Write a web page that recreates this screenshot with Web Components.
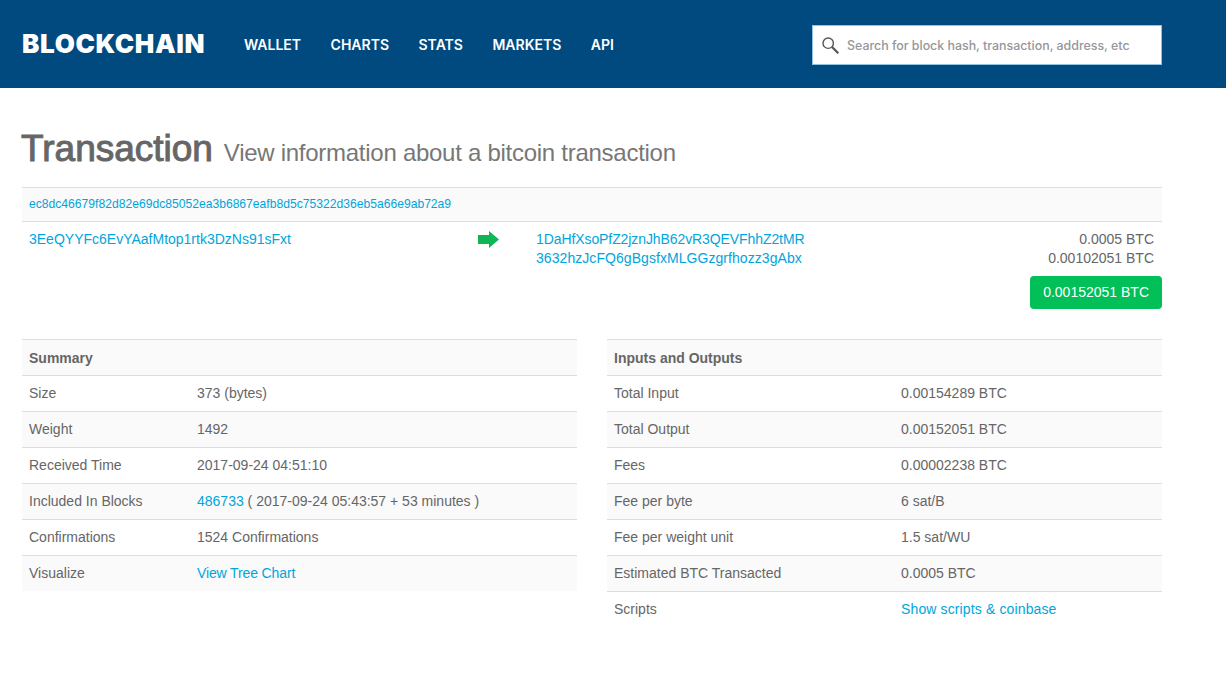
<!DOCTYPE html>
<html>
<head>
<meta charset="utf-8">
<title>Transaction</title>
<style>
  html, body { margin: 0; background: #fff; }
  body { font-family: "Liberation Sans", Arial, sans-serif; font-size: 14px; color: #555; }
  a { color: #00a5dc; text-decoration: none; }
</style>
</head>
<body>
<bc-header></bc-header>
<bc-page>
  <bc-heading title="Transaction" sub="View information about a bitcoin transaction"></bc-heading>
  <bc-tx></bc-tx>
  <bc-columns>
    <bc-table heading="Summary" col="168" id="summary"></bc-table>
    <bc-table heading="Inputs and Outputs" col="287" id="io"></bc-table>
  </bc-columns>
</bc-page>

<script>
const LINK = "#00a5dc";

class BcHeader extends HTMLElement {
  constructor() {
    super();
    this.attachShadow({ mode: "open" });
    this.shadowRoot.innerHTML = `
      <style>
      :host { display: flex; align-items: center; box-sizing: border-box; height: 88px; background: #004a7f; padding: 2px 64px 0 22px; font-family: Inter, "Liberation Sans", sans-serif; }
      .logo { font-size: 26px; font-weight: 900; color: #fff; letter-spacing: 0.65px; width: 222px; margin-top: -3px; }
      nav { display: flex; gap: 29.5px; flex: 1; margin-top: -1px; }
      nav a { color: #fff; font-size: 14px; font-weight: 600; text-decoration: none; }
      .search { display: flex; align-items: center; box-sizing: border-box; width: 350px; height: 40px; background: #fff; border: 1px solid #8fc3e6; padding-left: 8px; }
      .search svg { width: 19px; height: 19px; margin-right: 7px; }
      .search span { font-size: 12.4px; color: #96969a; font-weight: 500; white-space: nowrap; }
      </style>
      <div class="logo">BLOCKCHAIN</div>
      <nav><a>WALLET</a><a>CHARTS</a><a>STATS</a><a>MARKETS</a><a>API</a></nav>
      <div class="search">
        <svg viewBox="0 0 19 19" fill="none" stroke="#555" stroke-width="1.4">
          <circle cx="7.2" cy="7.2" r="5.2"/>
          <path d="M11 11l6.300 6.300" stroke-width="2.200"/>
        </svg>
        <span>Search for block hash, transaction, address, etc</span>
      </div>
    `;
  }
}

class BcPage extends HTMLElement {
  constructor() {
    super();
    this.attachShadow({ mode: "open" });
    this.shadowRoot.innerHTML = `
      <style>:host { display: block; width: 1140px; padding: 0 64px 0 22px; }</style>
      <slot></slot>
    `;
  }
}

class BcHeading extends HTMLElement {
  constructor() {
    super();
    this.attachShadow({ mode: "open" });
  }
  connectedCallback() {
    this.shadowRoot.innerHTML = `
      <style>
      :host { display: block; height: 99px; box-sizing: border-box; padding-top: 40px; margin-left: -1px; white-space: nowrap; line-height: 42px; }
      b { font-size: 37px; font-weight: 400; color: #666; -webkit-text-stroke: 1px #666; }
      span { font-size: 24px; letter-spacing: -0.27px; color: #777; margin-left: 7px; }
      </style>
      <b>${this.getAttribute("title")}</b> <span>${this.getAttribute("sub")}</span>
    `;
  }
}

class BcTx extends HTMLElement {
  constructor() {
    super();
    this.attachShadow({ mode: "open" });
    this.shadowRoot.innerHTML = `
      <style>
      :host { display: block; height: 152px; color: #666; font-size: 14px; }
      a { color: ${LINK}; text-decoration: none; }
      .hash { height: 33px; line-height: 32px; border-top: 1px solid #ddd; border-bottom: 1px solid #ddd; background: #fafafa; padding-left: 7px; font-size: 12.13px; }
      .row { display: grid; grid-template-columns: 449px 58px 1fr auto; padding: 8px 8px 0 7px; line-height: 19px; }
      .arrow { padding-top: 1px; }
      .arrow svg { display: block; width: 21px; height: 17px; }
      .amt { text-align: right; }
      .total { display: flex; justify-content: flex-end; margin-top: 8px; }
      .total span { background: #00c057; color: #fff; height: 33px; line-height: 33px; padding: 0 13px; border-radius: 4px; }
      .a1 { letter-spacing: -0.09px; }
      .a2 { letter-spacing: 0.06px; }
      </style>
      <div class="hash"><a>ec8dc46679f82d82e69dc85052ea3b6867eafb8d5c75322d36eb5a66e9ab72a9</a></div>
      <div class="row">
        <div><a>3EeQYYFc6EvYAafMtop1rtk3DzNs91sFxt</a></div>
        <div class="arrow"><svg viewBox="0 0 21 17"><path d="M0 4h11V0l10 8.500L11 17v-4H0z" fill="#10b556"/></svg></div>
        <div><a class="a1">1DaHfXsoPfZ2jznJhB62vR3QEVFhhZ2tMR</a><br><a class="a2">3632hzJcFQ6gBgsfxMLGGzgrfhozz3gAbx</a></div>
        <div class="amt">0.0005 BTC<br>0.00102051 BTC</div>
      </div>
      <div class="total"><span>0.00152051 BTC</span></div>
    `;
  }
}

class BcColumns extends HTMLElement {
  constructor() {
    super();
    this.attachShadow({ mode: "open" });
    this.shadowRoot.innerHTML = `
      <style>:host { display: grid; grid-template-columns: 555px 555px; gap: 30px; align-items: start; }</style>
      <slot></slot>
    `;
  }
}

class BcTable extends HTMLElement {
  constructor() {
    super();
    this.attachShadow({ mode: "open" });
  }
  set rows(rows) {
    const col = this.getAttribute("col");
    const html = rows.map((r, i) => `
      <div class="row${i % 2 ? " odd" : ""}"><div>${r[0]}</div><div>${r[1]}</div></div>
    `).join("");
    this.shadowRoot.innerHTML = `
      <style>
      :host { display: block; color: #666; font-size: 14px; }
      a { color: ${LINK}; text-decoration: none; }
      .row, .head { box-sizing: border-box; height: 36px; line-height: 35px; padding-left: 7px; background: #fff; border-top: 1px solid #ddd; }
      .row { display: grid; grid-template-columns: ${col}px 1fr; }
      .head { font-weight: 700; background: #fafafa; line-height: 37px; }
      .odd { background: #fafafa; }
      </style>
      <div class="head">${this.getAttribute("heading")}</div>
      ${html}
    `;
  }
}

customElements.define("bc-header", BcHeader);
customElements.define("bc-page", BcPage);
customElements.define("bc-heading", BcHeading);
customElements.define("bc-tx", BcTx);
customElements.define("bc-columns", BcColumns);
customElements.define("bc-table", BcTable);

document.getElementById("summary").rows = [
  ["Size", "373 (bytes)"],
  ["Weight", "1492"],
  ["Received Time", "2017-09-24 04:51:10"],
  ["Included In Blocks", "<a>486733</a> ( 2017-09-24 05:43:57 + 53 minutes )"],
  ["Confirmations", "1524 Confirmations"],
  ["Visualize", "<a style='letter-spacing:-.13px'>View Tree Chart</a>"]
];
document.getElementById("io").rows = [
  ["Total Input", "0.00154289 BTC"],
  ["Total Output", "0.00152051 BTC"],
  ["Fees", "0.00002238 BTC"],
  ["Fee per byte", "6 sat/B"],
  ["Fee per weight unit", "1.5 sat/WU"],
  ["Estimated BTC Transacted", "0.0005 BTC"],
  ["Scripts", "<a style='letter-spacing:.13px'>Show scripts &amp; coinbase</a>"]
];
</script>
</body>
</html>
